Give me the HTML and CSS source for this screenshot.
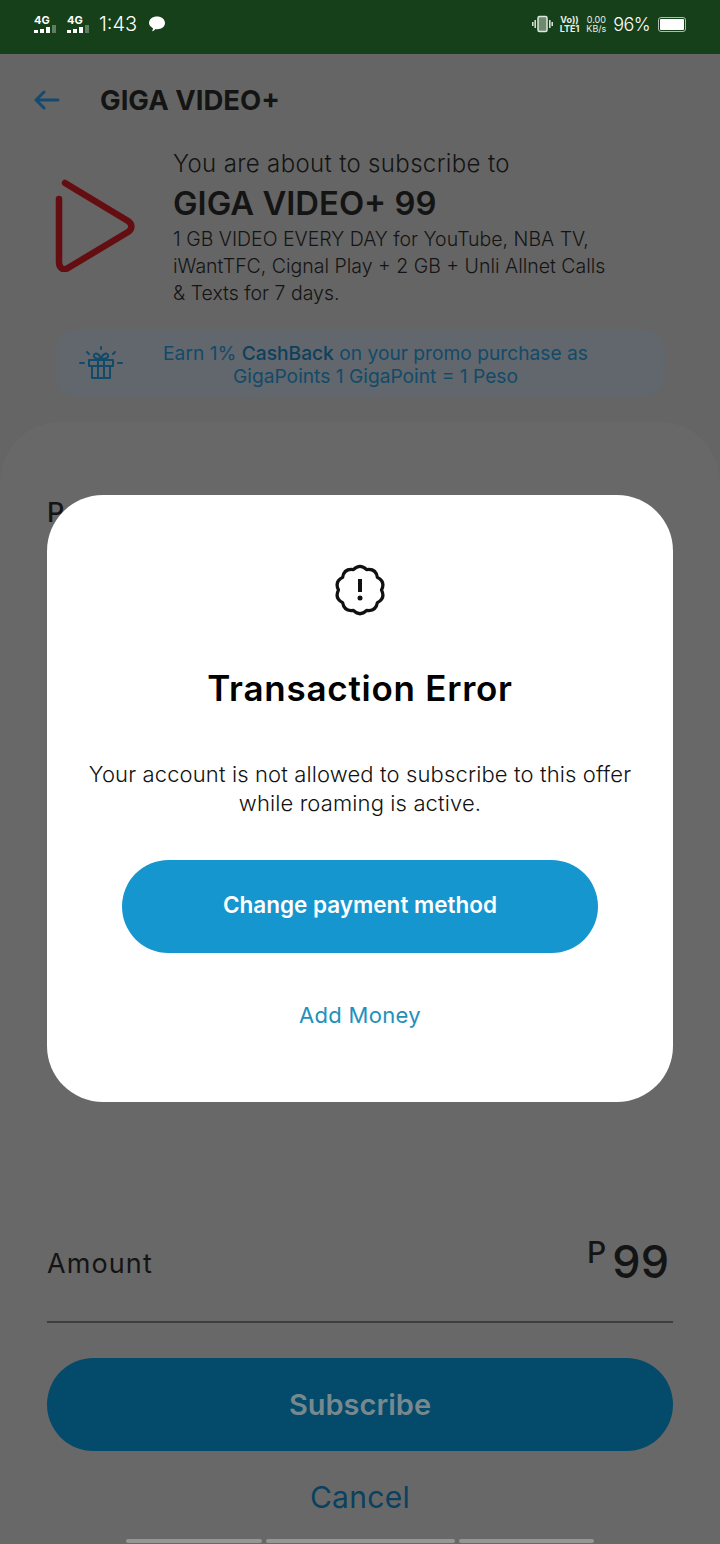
FILE: index.html
```html
<!DOCTYPE html>
<html lang="en">
<head>
    <meta charset="UTF-8">
    <meta name="viewport" content="width=device-width, initial-scale=1.0">
    <title>Giga Video+</title>
    <link rel="stylesheet" href="styles.css">
</head>
<body>
    <!-- Status bar -->
    <div class="status-bar">
        <div class="status-left">
            <div class="signal"><span class="signal-label">4G</span><div class="bars"><i class="b1"></i><i class="b2"></i><i class="b3"></i><i class="off"></i></div></div>
            <div class="signal"><span class="signal-label">4G</span><div class="bars"><i class="b1"></i><i class="b2"></i><i class="b3"></i><i class="off"></i></div></div>
            <span class="clock">1:43</span>
            <svg class="chat-icon" width="18" height="18" viewBox="0 0 18 18"><path d="M9 1.500c4.300 0 8 2.700 8 6.500s-3.700 6.200-7.500 6.200c-1 0-1.500-.1-2-.2-.8 1-2 2-3.500 2.200.7-.9 1-2 .9-3C2.700 11.800 1 10.200 1 8c0-3.800 3.700-6.500 8-6.500z" fill="#fff"/></svg>
        </div>
        <div class="status-right">
            <svg width="21" height="18" viewBox="0 0 21 18" fill="none" stroke="#dfe6df"><rect x="6" y="1.500" width="9" height="15" rx="1.500" fill="#6d8a6f" stroke-width="1.500"/><path d="M3.200 5v8M.8 7v4M17.800 5v8M20.200 7v4" stroke-width="1.500"/></svg>
            <div class="tiny"><span>Vo))</span><span>LTE1</span></div>
            <div class="tiny thin"><span>0.00</span><span>KB/s</span></div>
            <span class="battery-pct">96%</span>
            <div class="battery"><div class="battery-fill"></div></div>
        </div>
    </div>

    <div class="page">
        <div class="header">
            <svg class="back" width="26" height="20" viewBox="0 0 26 20" fill="none" stroke="#154a70" stroke-width="3" stroke-linecap="round" stroke-linejoin="round"><path d="M3 10h21M10 2l-8 8 8 8"/></svg>
            <h1 class="page-title">GIGA VIDEO+</h1>
        </div>

        <div class="offer">
            <svg class="offer-icon" width="82" height="94" viewBox="0 0 82 94" fill="none" stroke="#650e12" stroke-width="6.500" stroke-linecap="round" stroke-linejoin="round"><path d="M11 5 74 43c4.500 3 4.500 8 0 11L14 90c-5 3-9 0-9-6V21"/></svg>
            <div class="offer-text">
                <div class="offer-lead">You are about to subscribe to</div>
                <div class="offer-name">GIGA VIDEO+ 99</div>
                <div class="offer-desc">1 GB VIDEO EVERY DAY for YouTube, NBA TV,<br>iWantTFC, Cignal Play + 2 GB + Unli Allnet Calls<br>&amp; Texts for 7 days.</div>
            </div>
        </div>

        <div class="promo">
            <svg class="gift" width="44" height="34" viewBox="0 0 44 34" fill="none" stroke="#124a6a" stroke-width="2" stroke-linecap="round" stroke-linejoin="round"><path d="M10 14h24v6H10zM13 20v12h18V20zM19 14v18M25 14v18M22 13c-4 0-8-1-7-4s6-1 7 4c1-5 6-7 7-4s-3 4-7 4zM1 17h4M39 17h4M22 1v2M8 6l2 2M36 6l-2 2"/></svg>
            <div class="promo-text">Earn 1% <b>CashBack</b> on your promo purchase as<br>GigaPoints 1 GigaPoint = 1 Peso</div>
        </div>

        <div class="sheet">
            <div class="sheet-label">Pay with</div>
            <div class="amount-row">
                <span class="amount-label">Amount</span>
                <span class="amount-value"><small>P</small>99</span>
            </div>
            <div class="subscribe">Subscribe</div>
            <div class="cancel">Cancel</div>
            <div class="tabs"><i class="tab-a"></i><i class="tab-b"></i><i class="tab-c"></i></div>
        </div>
    </div>

    <!-- Dialog -->
    <div class="dialog">
        <svg class="alert-icon" width="52" height="52" viewBox="0 0 52 52" fill="none" stroke="#111" stroke-width="3.200" stroke-linejoin="round"><path d="M19.400 5.600Q26-1 32.600 5.600 41.900 4.200 43.400 13.400 51.700 17.700 47.500 26 51.700 34.300 43.400 38.600 41.900 47.800 32.600 46.400 26 53 19.400 46.400 10.100 47.800 8.600 38.600 .3 34.300 4.500 26 .3 17.700 8.600 13.400 10.100 4.200 19.400 5.600Z"/><path d="M26 15v13" stroke-width="4"/><circle cx="26" cy="34" r="2.500" fill="#111" stroke="none"/></svg>
        <h2 class="dialog-title">Transaction Error</h2>
        <p class="dialog-msg">Your account is not allowed to subscribe to this offer<br>while roaming is active.</p>
        <div class="dialog-btn">Change payment method</div>
        <div class="dialog-link">Add Money</div>
    </div>
</body>
</html>
```

FILE: styles.css
```css
body {
    margin: 0;
    width: 720px;
    height: 1544px;
    overflow: hidden;
    display: flex;
    flex-direction: column;
    position: relative;
    font-family: "Inter", "Open Sans", sans-serif;
    background-color: #656565;
    color: #141414;
}
.status-bar {
    height: 54px;
    flex-shrink: 0;
    box-sizing: border-box;
    padding: 0 34px 6px 34px;
    display: flex;
    justify-content: space-between;
    align-items: center;
    background-color: #16401a;
    color: #ffffff;
}
.status-left, .status-right {
    display: flex;
    align-items: center;
}
.signal {
    display: flex;
    flex-direction: column;
    width: 27px;
    margin-right: 6px;
}
.signal-label {
    font-size: 11px;
    font-weight: 700;
    line-height: 9px;
}
.bars {
    display: flex;
    gap: 2px;
    align-items: flex-end;
    height: 8px;
}
.bars i {
    width: 4px;
    background-color: #ffffff;
}
.bars .b1 { height: 3px; }
.bars .b2 { height: 4px; }
.bars .b3 { height: 6px; }
.bars .off {
    height: 8px;
    background-color: #5d7f5f;
}
.clock {
    font-size: 20px;
    font-weight: 300;
    margin-left: -1px;
}
.chat-icon {
    margin-left: 11px;
}
.status-right {
    gap: 7px;
}
.tiny {
    display: flex;
    flex-direction: column;
    font-size: 9px;
    font-weight: 700;
    line-height: 9px;
    text-align: center;
    color: #e8eee8;
}
.tiny.thin {
    font-weight: 400;
}
.battery-pct {
    font-size: 18px;
    font-weight: 300;
    letter-spacing: -0.6px;
}
.battery {
    width: 24px;
    height: 11px;
    margin-left: 1px;
    padding: 1px;
    border: 1px solid #aebcae;
    border-radius: 3px;
}
.battery-fill {
    height: 100%;
    background-color: #ffffff;
    border-radius: 1px;
}
.page {
    flex: 1;
    display: flex;
    flex-direction: column;
    min-height: 0;
}
.header {
    display: flex;
    align-items: center;
    height: 48px;
    margin-top: 22px;
    padding-left: 34px;
}
.page-title {
    margin: 0 0 0 40px;
    font-size: 27.500px;
    font-weight: 700;
}
.offer {
    display: flex;
    align-items: flex-start;
    margin-top: 22px;
    padding-left: 54px;
}
.offer-icon {
    margin-top: 32px;
}
.offer-text {
    margin-left: 37px;
}
.offer-lead {
    font-size: 24px;
    font-weight: 300;
    line-height: 35px;
    letter-spacing: 0.35px;
}
.offer-name {
    font-size: 32.800px;
    font-weight: 600;
    line-height: 45px;
}
.offer-desc {
    font-size: 19.500px;
    font-weight: 300;
    line-height: 27px;
}
.promo {
    display: flex;
    align-items: center;
    height: 68px;
    margin: 22px 55px 0;
    padding-left: 24px;
    background-color: #61676c;
    border-radius: 24px;
}
.promo-text {
    flex: 1;
    padding: 3px 37px 0 0;
    font-size: 19.200px;
    line-height: 23px;
    text-align: center;
    color: #124a6a;
}
.promo-text b {
    font-weight: 500;
    color: #0e405c;
}
.sheet {
    flex: 1;
    display: flex;
    flex-direction: column;
    margin-top: 25px;
    padding: 0 47px;
    background-color: #686868;
    border-radius: 60px 60px 0 0;
}
.sheet-label {
    margin-top: 74px;
    font-size: 27px;
    font-weight: 500;
}
.amount-row {
    margin-top: auto;
    display: flex;
    justify-content: space-between;
    align-items: center;
    height: 52px;
    padding-bottom: 32px;
    border-bottom: 2px solid #3e3e3e;
}
.amount-label {
    font-size: 27px;
    font-weight: 400;
    letter-spacing: 1.1px;
}
.amount-value {
    margin-top: -4px;
    font-size: 45px;
    font-weight: 500;
    padding-right: 4px;
}
.amount-value small {
    position: relative;
    top: -15px;
    margin-right: 6px;
    font-size: 30px;
}
.subscribe {
    margin-top: 35px;
    height: 93px;
    line-height: 93px;
    border-radius: 47px;
    background-color: #044a6a;
    color: #78888f;
    font-size: 29px;
    font-weight: 600;
    text-align: center;
}
.cancel {
    margin-top: 26px;
    font-size: 30px;
    line-height: 40px;
    letter-spacing: 0.3px;
    text-align: center;
    color: #0a4060;
}
.tabs {
    display: flex;
    gap: 4px;
    justify-content: center;
    margin-top: 22px;
    margin-bottom: 1px;
}
.tabs i {
    height: 4px;
    background-color: #969696;
    border-radius: 2px;
}
.tab-a { width: 136px; }
.tab-b { width: 189px; }
.tab-c { width: 135px; }
.dialog {
    position: absolute;
    left: 47px;
    top: 495px;
    width: 626px;
    height: 607px;
    display: flex;
    flex-direction: column;
    align-items: center;
    background-color: #ffffff;
    border-radius: 56px;
    color: #000000;
}
.alert-icon {
    margin-top: 69px;
}
.dialog-title {
    margin: 48px 0 0;
    font-size: 35px;
    font-weight: 600;
    line-height: 48px;
    letter-spacing: 0.75px;
}
.dialog-msg {
    margin: 48px 0 0;
    font-size: 22px;
    font-weight: 300;
    line-height: 29px;
    letter-spacing: 0.13px;
    text-align: center;
    color: #111111;
}
.dialog-btn {
    margin-top: 42px;
    width: 476px;
    height: 93px;
    line-height: 89px;
    border-radius: 47px;
    background-color: #1696cf;
    color: #ffffff;
    font-size: 22.500px;
    font-weight: 600;
    text-align: center;
}
.dialog-link {
    margin-top: 49px;
    font-size: 22px;
    font-weight: 400;
    letter-spacing: 0.3px;
    color: #2290bd;
}
```
